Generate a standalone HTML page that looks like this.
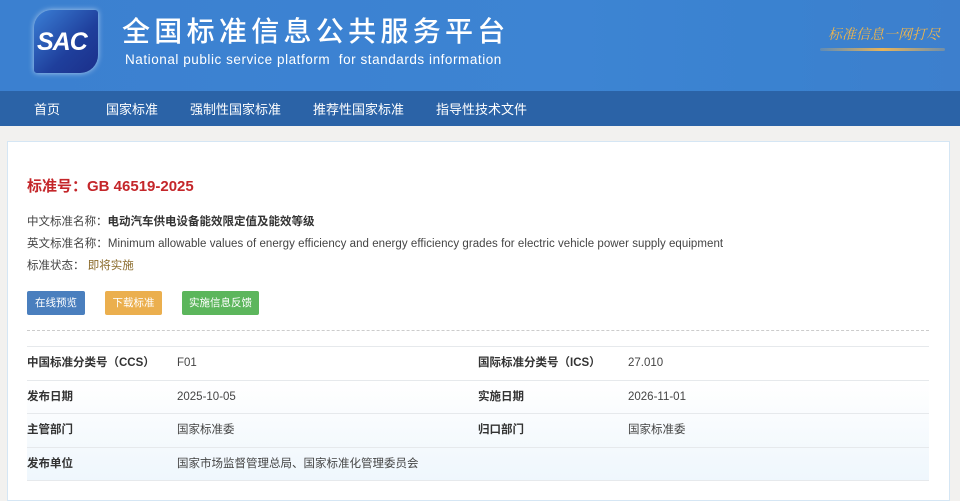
<!DOCTYPE html>
<html><head><meta charset="utf-8"><style>
*{margin:0;padding:0;box-sizing:border-box}
body{width:960px;height:488px;overflow:hidden;background:#f2f1ef;font-family:"Liberation Sans","Noto Sans CJK SC",sans-serif;position:relative}
.hd{position:absolute;left:0;top:0;width:960px;height:91px;background:linear-gradient(90deg,#3b80d0 0%,#3d84d3 60%,#3a82d0 80%,#3d7fcd 100%)}
.logo{position:absolute;left:34px;top:10px;width:64px;height:63px;background:linear-gradient(135deg,#3a7fd6,#1f3f9c 60%,#1b2f8a);border-radius:18px 3px 18px 3px;box-shadow:0 0 6px rgba(255,255,255,.6)}
.logo span{position:absolute;left:3px;top:18px;font:italic bold 25px "Liberation Sans",sans-serif;color:#fff;letter-spacing:-1px}
.t1{position:absolute;left:122px;top:12px;color:#fff;font-size:28px;letter-spacing:4.3px;font-family:"Noto Sans CJK SC",sans-serif;line-height:36px;font-weight:500}
.t2{position:absolute;left:125px;top:52px;color:#fff;font-size:13.5px;letter-spacing:0.55px;white-space:pre}
.slog{position:absolute;left:828px;top:24px;color:#f0b54a;font-size:14px;font-style:italic;font-family:"Noto Serif CJK SC",serif}
.sline{position:absolute;left:820px;top:48px;width:125px;height:3px;background:linear-gradient(90deg,rgba(240,180,80,.2),#e8b45a,rgba(240,180,80,.3));border-radius:2px}
.nav{position:absolute;left:0;top:91px;width:960px;height:35px;background:#2b63a7}
.nav span{position:absolute;top:8px;color:#fff;font-size:13px}
.card{position:absolute;left:7px;top:141px;width:943px;height:360px;background:#fff;border:1px solid #d5e6f4}
.h{position:absolute;left:27px;top:175px;color:#c4262a;font-size:15px;font-weight:bold}
.l{position:absolute;left:27px;font-size:11.5px;color:#444}
.btn{position:absolute;top:291px;height:24px;color:#fff;font-size:10.5px;line-height:24px;text-align:center;border-radius:2px}
.dash{position:absolute;left:27px;top:330px;width:902px;border-top:1px dashed #ccc}
.row{position:absolute;left:27px;width:902px;height:34px;border-top:1px solid #e6e9ec;font-size:11.5px;color:#333;line-height:33px}
.row b{position:absolute;top:0;font-weight:bold;color:#333}
.row i{position:absolute;top:0;font-style:normal;color:#444}
</style></head><body>
<div class="hd">
<div class="logo"><span>SAC</span></div>
<div class="t1">全国标准信息公共服务平台</div>
<div class="t2">National public service platform  for standards information</div>
<div class="slog">标准信息一网打尽</div>
<div class="sline"></div>
</div>
<div class="nav"><span style="left:34px">首页</span><span style="left:106px">国家标准</span><span style="left:190px">强制性国家标准</span><span style="left:313px">推荐性国家标准</span><span style="left:436px">指导性技术文件</span></div>
<div class="card"></div>
<div class="h">标准号：GB 46519-2025</div>
<div class="l" style="top:213px">中文标准名称：<b style="color:#333">电动汽车供电设备能效限定值及能效等级</b></div>
<div class="l" style="top:235px;letter-spacing:0.05px">英文标准名称：Minimum allowable values of energy efficiency and energy efficiency grades for electric vehicle power supply equipment</div>
<div class="l" style="top:257px">标准状态： <b style="color:#8a6a2a;font-weight:normal">即将实施</b></div>
<div class="btn" style="left:27px;width:58px;background:#4a7fbe">在线预览</div>
<div class="btn" style="left:105px;width:57px;background:#ebaf4e">下载标准</div>
<div class="btn" style="left:182px;width:77px;background:#5cb65c">实施信息反馈</div>
<div class="dash"></div>
<div class="row" style="top:346px"><b style="left:0">中国标准分类号（CCS）</b><i style="left:150px">F01</i><b style="left:451px">国际标准分类号（ICS）</b><i style="left:601px">27.010</i></div>
<div class="row" style="top:380px;background:linear-gradient(#fff,#fafcfe)"><b style="left:0">发布日期</b><i style="left:150px">2025-10-05</i><b style="left:451px">实施日期</b><i style="left:601px">2026-11-01</i></div>
<div class="row" style="top:413px;background:linear-gradient(#fafcfe,#f4f9fd)"><b style="left:0">主管部门</b><i style="left:150px">国家标准委</i><b style="left:451px">归口部门</b><i style="left:601px">国家标准委</i></div>
<div class="row" style="top:447px;background:linear-gradient(#f4f9fd,#eff7fd);border-bottom:1px solid #e6e9ec"><b style="left:0">发布单位</b><i style="left:150px">国家市场监督管理总局、国家标准化管理委员会</i></div>
</body></html>
